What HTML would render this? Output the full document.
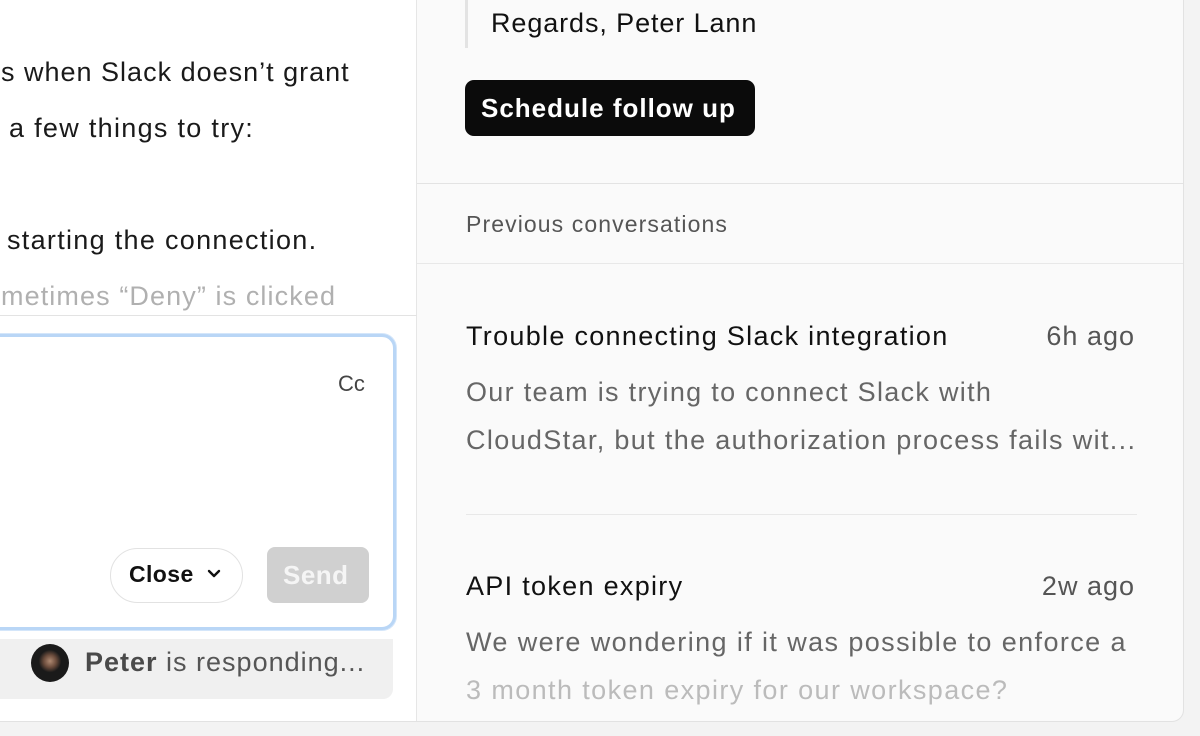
<!DOCTYPE html>
<html><head><meta charset="utf-8"><style>
*{margin:0;padding:0;box-sizing:border-box}
body{width:1200px;height:736px;overflow:hidden;background:#f3f3f3;font-family:"Liberation Sans",sans-serif;position:relative}
.card{position:absolute;left:-20px;top:-20px;width:1204px;height:742px;border:1px solid #e2e2e2;border-radius:12px;background:#fafafa;overflow:hidden}
.left{position:absolute;left:0;top:0;width:436px;height:742px;background:#fff;border-right:1px solid #e6e6e6}
.t{position:absolute;white-space:nowrap}
.m{font-size:27px;letter-spacing:1.3px}
</style></head><body>
<div class="card">
 <div class="left">
  <div class="t m" style="left:20px;top:76px;color:#1a1a1a;letter-spacing:1px">s when Slack doesn’t grant</div>
  <div class="t m" style="left:28px;top:132px;color:#1a1a1a">a few things to try:</div>
  <div class="t m" style="left:26px;top:244px;color:#1a1a1a">starting the connection.</div>
  <div class="t m" style="left:20px;top:300px;color:#b0b0b0;letter-spacing:1.1px">metimes “Deny” is clicked</div>
  <div style="position:absolute;left:0;top:334px;width:436px;height:1px;background:#e3e3e3"></div>
  <div style="position:absolute;left:0;top:658px;width:412px;height:60px;background:#f0f0f0;border-radius:0 0 10px 0"></div>
  <div style="position:absolute;left:-10px;top:353px;width:425px;height:296px;border:3px solid #b9d6f6;border-radius:14px;background:#fff;box-shadow:0 0 0 1px #d4e6fa"></div>
  <div class="t" style="left:357px;top:390px;font-size:22px;color:#444">Cc</div>
  <div style="position:absolute;left:129px;top:567px;width:133px;height:55px;border:1px solid #e2e2e2;border-radius:28px;background:#fff"></div>
  <div class="t" style="left:148px;top:580px;font-size:23px;font-weight:bold;color:#111;letter-spacing:0.4px">Close</div>
  <svg style="position:absolute;left:226px;top:588px" width="14" height="10" viewBox="0 0 14 10"><path d="M2 2l5 5 5-5" fill="none" stroke="#111" stroke-width="2.4" stroke-linecap="round" stroke-linejoin="round"/></svg>
  <div style="position:absolute;left:286px;top:566px;width:102px;height:56px;border-radius:8px;background:#d0d0d0"></div>
  <div class="t" style="left:302px;top:579px;font-size:26px;font-weight:bold;color:#f5f5f5;letter-spacing:0.5px">Send</div>
  <div style="position:absolute;left:50px;top:663px;width:38px;height:38px;border-radius:50%;background:radial-gradient(circle at 50% 45%,#b08a72 0,#6b4c3c 22%,#1a1a1a 40%)"></div>
  <div class="t" style="left:104px;top:666px;font-size:27px;letter-spacing:1px;color:#555"><b style="color:#4a4a4a">Peter</b> is responding...</div>
 </div>
 <div style="position:absolute;left:484px;top:0;width:3px;height:67px;background:#e3e3e3"></div>
 <div class="t" style="left:510px;top:27px;font-size:27px;letter-spacing:0.9px;color:#111">Regards, Peter Lann</div>
 <div style="position:absolute;left:484px;top:99px;width:290px;height:56px;background:#0b0b0b;border-radius:9px"></div>
 <div class="t" style="left:500px;top:112px;font-size:26px;font-weight:bold;color:#fff;letter-spacing:1px">Schedule follow up</div>
 <div style="position:absolute;left:436px;top:202px;width:770px;height:1px;background:#e3e3e3"></div>
 <div class="t" style="left:485px;top:230px;font-size:23px;letter-spacing:1.1px;color:#555">Previous conversations</div>
 <div style="position:absolute;left:436px;top:282px;width:770px;height:1px;background:#e8e8e8"></div>
 <div class="t m" style="left:485px;top:340px;color:#111">Trouble connecting Slack integration</div>
 <div class="t m" style="right:48px;top:340px;color:#555;letter-spacing:1px">6h ago</div>
 <div class="t m" style="left:485px;top:396px;color:#666">Our team is trying to connect Slack with</div>
 <div class="t m" style="left:485px;top:444px;color:#666;letter-spacing:1.35px">CloudStar, but the authorization process fails wit...</div>
 <div style="position:absolute;left:485px;top:533px;width:671px;height:1px;background:#e8e8e8"></div>
 <div class="t m" style="left:485px;top:590px;color:#111">API token expiry</div>
 <div class="t m" style="right:48px;top:590px;color:#555;letter-spacing:1px">2w ago</div>
 <div class="t m" style="left:485px;top:646px;color:#666;letter-spacing:1.4px">We were wondering if it was possible to enforce a</div>
 <div class="t m" style="left:485px;top:694px;color:#bbb;letter-spacing:1.4px">3 month token expiry for our workspace?</div>
</div>
</body></html>
